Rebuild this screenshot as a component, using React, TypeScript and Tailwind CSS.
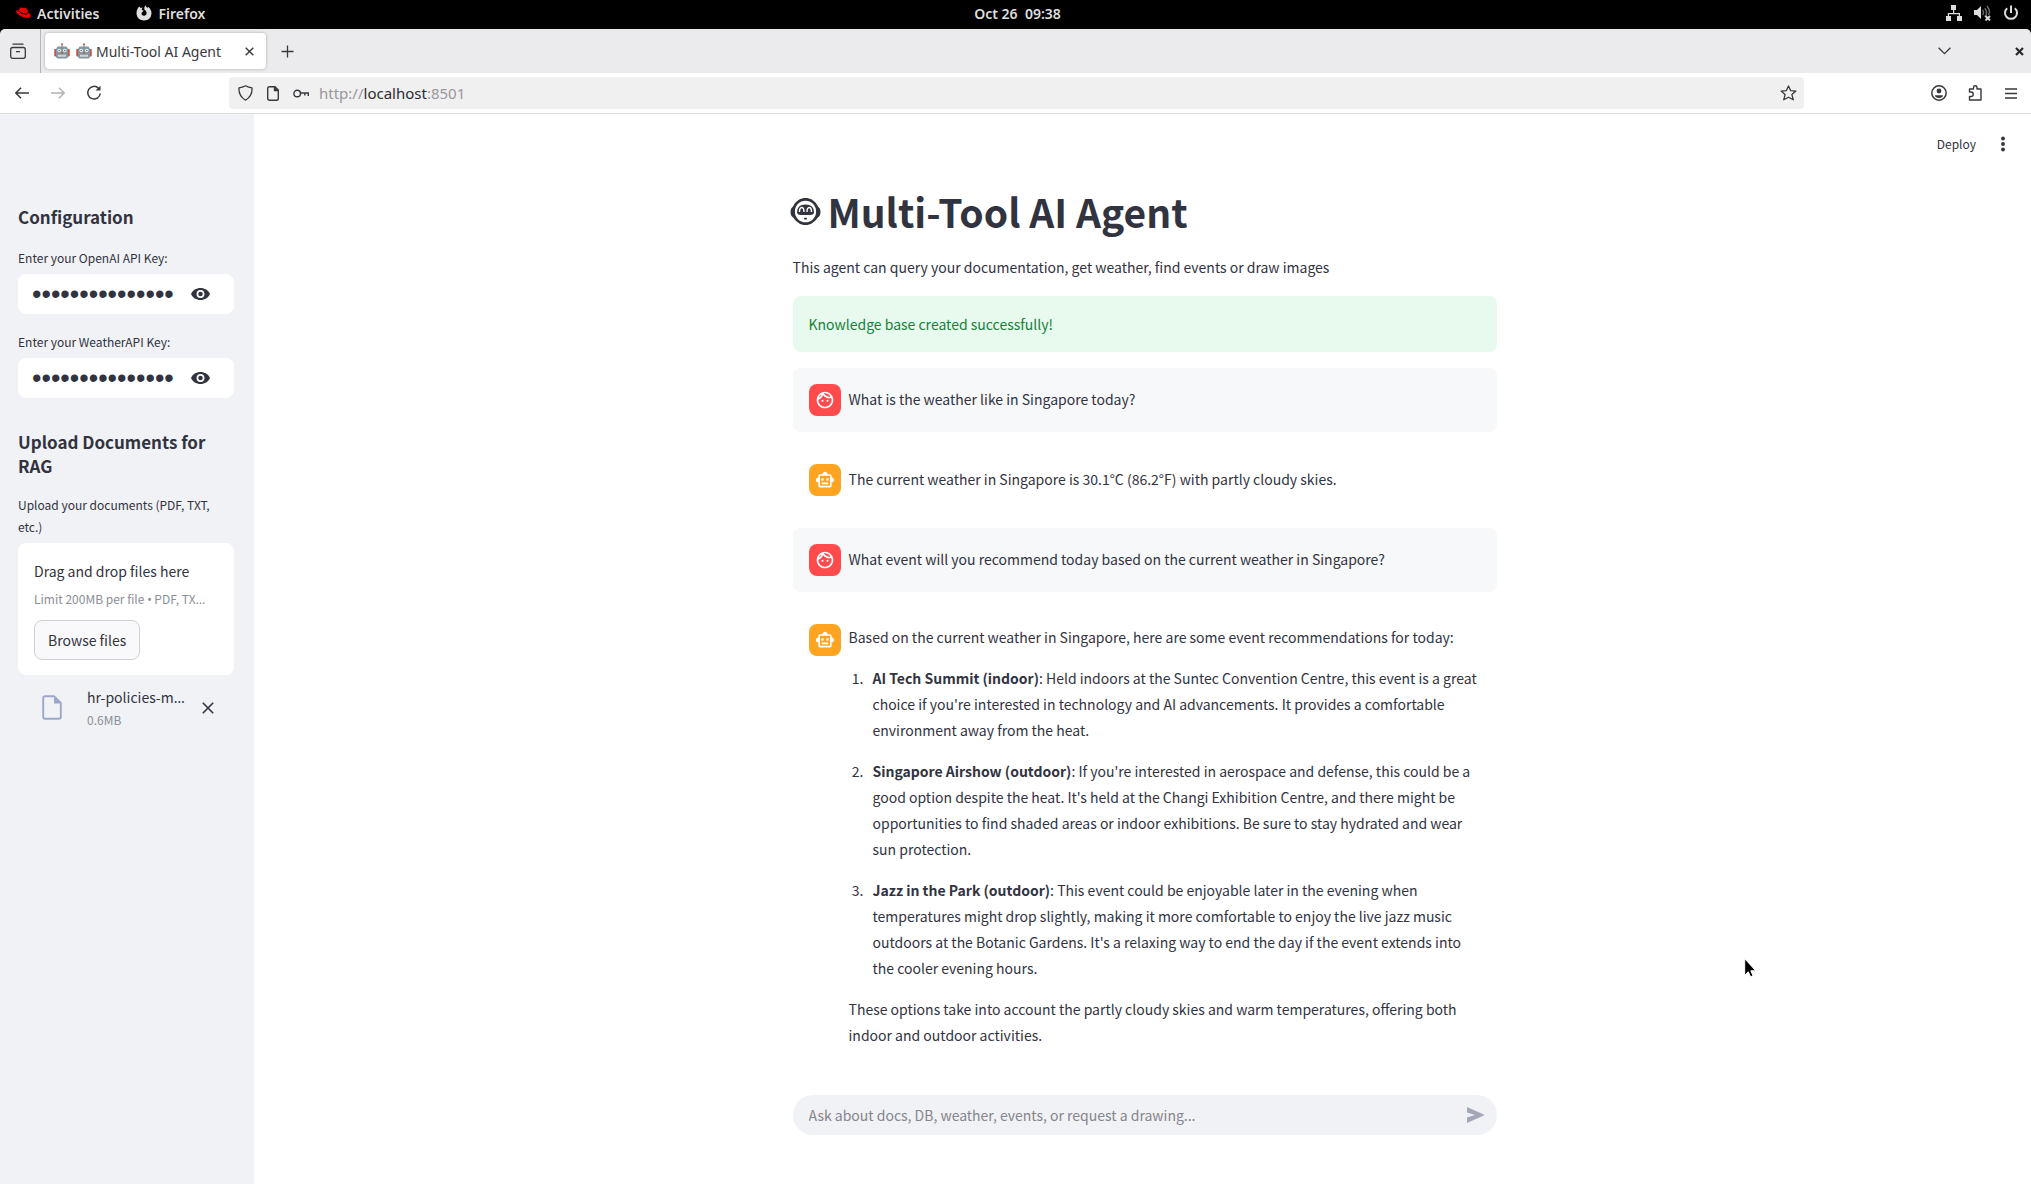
import React from "react";
import { MdOutlineFace, MdOutlineSmartToy } from "react-icons/md";

function RobotEmoji() {
  return (
    <svg width="16" height="16" viewBox="0 0 32 32" aria-hidden="true" className="shrink-0">
      <rect x="0.5" y="12" width="4" height="15" rx="1.5" fill="#c9504f" />
      <rect x="27.5" y="12" width="4" height="15" rx="1.5" fill="#c9504f" />
      <path d="M16 2v7" stroke="#7b8a93" strokeWidth="2" />
      <circle cx="16" cy="2.6" r="2" fill="#d9534f" />
      <path d="M7 7h18l3 5v15q0 4-4 4H8q-4 0-4-4V12z" fill="#84979f" />
      <circle cx="10.5" cy="15" r="3.6" fill="#eef3f5" />
      <circle cx="21.5" cy="15" r="3.6" fill="#eef3f5" />
      <circle cx="10.5" cy="15" r="1.6" fill="#5d7079" />
      <circle cx="21.5" cy="15" r="1.6" fill="#5d7079" />
      <path d="M16 17l2.4 4h-4.8z" fill="#d9403f" />
      <rect x="8" y="23.5" width="16" height="4" rx="1.5" fill="#dfe6e9" />
      <path d="M12 23.5v4M16 23.5v4M20 23.5v4" stroke="#84979f" />
    </svg>
  );
}

function RobotFace() {
  return (
    <svg width="31" height="27" viewBox="0 0 31 27" fill="none" aria-hidden="true" className="-ml-[3px] mr-[7px] shrink-0">
      <path d="M4 8Q.5 9.500.5 14T4 20zM27 8q3.500 1.500 3.500 6T27 20z" fill="#31333f" />
      <ellipse cx="15.500" cy="13.500" rx="12" ry="12.200" stroke="#31333f" strokeWidth="2.800" fill="#fff" />
      <path d="M7 14.500Q7 6.500 15.500 6.500T24 14.500Q23.500 17 20 17H11Q7.500 17 7 14.500z" fill="#31333f" />
      <path d="M9.500 14q0-4.500 2.200-4.500T14 14M17 14q0-4.500 2.200-4.500T21.500 14" stroke="#fff" strokeWidth="1.400" />
      <rect x="14" y="19.800" width="3" height="1.600" rx=".6" fill="#31333f" />
    </svg>
  );
}

function SystemBar() {
  return (
    <header className="flex h-[29px] items-center bg-black pb-[3px] pl-4 pr-3 text-[14px] font-semibold text-[#dedede]">
      <div className="flex flex-1 items-center">
        <button className="flex h-6 items-center gap-[6px]">
          <svg width="15" height="12" viewBox="0 0 15 12" aria-hidden="true">
            <path d="M3.600 1.200Q4 .2 5.200.6 6.500 1.200 7.400.9 9 .2 10.400 1.300 11.500 2.200 12.300 5.800 14.700 7 14.900 8.800 14.900 11 11.300 11 7 11 3.300 8.300.2 6.300.1 4.500 0 3 3 3.300z" fill="#e00" />
            <path d="M2.900 3.700Q3 5 6 6.400 10.500 8.200 12.200 6" stroke="#000" strokeWidth="1" fill="none" />
          </svg>
          Activities
        </button>
        <button className="ml-[37px] flex h-6 items-center gap-[6px]">
          <svg width="16" height="16" viewBox="0 0 16 16" fill="none" aria-hidden="true">
            <path d="M3.200 1.500 4.600 3 6.500 2.600 5.600 4.800 7.600 5.800 6 7.500Q5 8.300 5.700 9.500 7 11.300 9 10.600 11 9.600 10.600 7.400 10 5.500 8.300 4.400 7.800 2.200 9.600.3 10 2 11.300 3L12.200 1.800Q15.700 4.600 15.500 8.700 14.800 15 8 15.600 1.500 15.300.5 9 .3 4.500 3.200 1.500z" fill="#dedede" />
          </svg>
          Firefox
        </button>
      </div>
      <time>Oct 26&nbsp; 09:38</time>
      <div className="flex flex-1 items-center justify-end gap-3">
        <svg width="16" height="16" viewBox="0 0 16 16" fill="#dedede" aria-hidden="true">
          <path d="M5 0h5v5H5zM0 11h5v5H0zM11 11h5v5h-5zM7 5h1.200v3H14v3h-1.200V9.200H3V11H1.800V8H7z" />
        </svg>
        <svg width="17" height="16" viewBox="0 0 17 16" aria-hidden="true">
          <path d="M0 5h3l4-4v13l-4-4H0z" fill="#dedede" />
          <path d="M8.500 5q2 2.500 0 5M10.800 3.200q3.500 4.300 0 8.600M13 1q4 5 1.500 9" stroke="#666" strokeWidth="1.500" fill="none" />
          <path d="m11.500 11 4.500 4.500m0-4.500-4.500 4.500" stroke="#dedede" strokeWidth="1.800" />
        </svg>
        <svg width="16" height="16" viewBox="0 0 16 16" fill="none" stroke="#dedede" strokeWidth="2" aria-hidden="true">
          <path d="M4.200 3.200a6 6 0 1 0 7.600 0M8 .5V8" />
        </svg>
      </div>
    </header>
  );
}

function TabStrip() {
  return (
    <div className="bg-black">
      <div className="flex h-11 items-center rounded-t-[5px] bg-[#ebebed] pr-[7px] text-[#38383d]">
        <button aria-label="Firefox View" className="flex h-full w-[41px] items-center justify-center border-r border-[#b5b5b9] pr-1">
          <svg width="16" height="16" viewBox="0 0 16 16" fill="none" stroke="currentColor" strokeWidth="1.300" aria-hidden="true">
            <rect x=".7" y="4.500" width="14.600" height="10.800" rx="2" />
            <path d="M2.500 1.200h11M6 8.600h4" />
          </svg>
        </button>
        <div className="ml-1 flex h-9 w-[221px] items-center rounded bg-white pl-[9px] pr-3 text-[14px] shadow-[0_0_3px_rgba(0,0,0,0.3)]">
          <RobotEmoji />
          <span className="ml-[6px] flex flex-1 items-center gap-1 whitespace-nowrap">
            <RobotEmoji />
            Multi-Tool AI Agent
          </span>
          <button aria-label="Close tab">
            <svg width="9" height="9" viewBox="0 0 9 9" stroke="currentColor" strokeWidth="1.400" aria-hidden="true">
              <path d="m.7.7 7.600 7.600m0-7.600L.7 8.300" />
            </svg>
          </button>
        </div>
        <button aria-label="New tab" className="ml-[15px]">
          <svg width="13" height="13" viewBox="0 0 13 13" stroke="currentColor" strokeWidth="1.300" aria-hidden="true">
            <path d="M6.500.5v12M.5 6.500h12" />
          </svg>
        </button>
        <button aria-label="List all tabs" className="ml-auto">
          <svg width="13" height="8" viewBox="0 0 13 8" fill="none" stroke="currentColor" strokeWidth="1.300" aria-hidden="true">
            <path d="m.6.800 5.900 5.800L12.400.8" />
          </svg>
        </button>
        <button aria-label="Close window" className="ml-[64px]">
          <svg width="9" height="9" viewBox="0 0 9 9" stroke="#2a2a2e" strokeWidth="2.200" aria-hidden="true">
            <path d="m1 1 7 7m0-7L1 8" />
          </svg>
        </button>
      </div>
    </div>
  );
}

function Toolbar() {
  return (
    <div className="flex h-[41px] items-center border-b border-[#dcdcdf] bg-white pl-[15px] pr-[14px] text-[#38383d]">
      <button aria-label="Back">
        <svg width="14" height="12" viewBox="0 0 14 12" fill="none" stroke="currentColor" strokeWidth="1.500" aria-hidden="true">
          <path d="M14 6H1M6 .7.900 6 6 11.300" />
        </svg>
      </button>
      <button aria-label="Forward" className="ml-[22px] text-[#b4b4b7]">
        <svg width="14" height="12" viewBox="0 0 14 12" fill="none" stroke="currentColor" strokeWidth="1.500" aria-hidden="true">
          <path d="M0 6h13M8 .7 13.100 6 8 11.300" />
        </svg>
      </button>
      <button aria-label="Reload" className="ml-[21px]">
        <svg width="16" height="16" viewBox="0 0 16 16" fill="none" aria-hidden="true">
          <path d="M12.500 3.200A6.300 6.300 0 1 0 14.300 8.500" stroke="currentColor" strokeWidth="1.500" />
          <path d="M9.500 5.500h5V.7z" fill="currentColor" />
        </svg>
      </button>
      <div className="ml-[127px] mr-[127px] flex h-8 flex-1 items-center rounded bg-[#f0f0f1] pl-[9px] pr-[7px]">
        <svg width="15" height="16" viewBox="0 0 15 16" fill="none" stroke="currentColor" strokeWidth="1.300" aria-hidden="true">
          <path d="M7.500.800Q10.500 2.500 14 2.800 14.600 11 7.500 15.200.4 11 1 2.800 4.500 2.500 7.500.8z" strokeLinejoin="round" />
        </svg>
        <svg width="12" height="15" viewBox="0 0 12 15" fill="none" stroke="currentColor" strokeWidth="1.400" className="ml-[14px]" aria-hidden="true">
          <path d="M2.500.700H8L11.300 4v8.500a1.800 1.800 0 0 1-1.800 1.800h-7A1.800 1.800 0 0 1 .7 12.500v-10A1.800 1.800 0 0 1 2.500.7z" />
          <path d="M7.500 1v3.500H11" fill="currentColor" />
        </svg>
        <svg width="17" height="9" viewBox="0 0 17 9" fill="none" stroke="currentColor" strokeWidth="1.400" className="ml-[14px]" aria-hidden="true">
          <circle cx="4.200" cy="4.500" r="3.300" />
          <path d="M7.500 4H16M15.300 4v3M11.800 4v2.500" />
        </svg>
        <a href="http://localhost:8501" className="ml-[9px] text-[15px] text-[#98989c]">
          http://<span className="text-[#2a2a2e]">localhost</span>:8501
        </a>
        <button aria-label="Bookmark this page" className="ml-auto">
          <svg width="17" height="16" viewBox="0 0 17 16" fill="none" stroke="currentColor" strokeWidth="1.300" strokeLinejoin="round" aria-hidden="true">
            <path d="m8.500 1 2.100 4.600 5.300.5-4 3.500 1.400 5.200-4.800-2.600-4.800 2.600 1.400-5.200-4-3.500 5.300-.5z" />
          </svg>
        </button>
      </div>
      <button aria-label="Account">
        <svg width="16" height="16" viewBox="0 0 16 16" fill="none" aria-hidden="true">
          <circle cx="8" cy="8" r="7.200" stroke="currentColor" strokeWidth="1.500" />
          <circle cx="8" cy="6" r="2.400" fill="currentColor" />
          <path d="M4 10.300h8l-.6 1.700Q8 14 4.600 12z" fill="currentColor" />
        </svg>
      </button>
      <button aria-label="Extensions" className="ml-[21px]">
        <svg width="15" height="16" viewBox="0 0 15 16" fill="none" stroke="currentColor" strokeWidth="1.400" strokeLinejoin="round" aria-hidden="true">
          <path d="M1.500 7V4h4V2.500a1.700 1.700 0 0 1 3.500 0V4h4v11H1.500v-3.500H3A2.200 2.200 0 0 0 3 7z" />
        </svg>
      </button>
      <button aria-label="Open menu" className="ml-[22px]">
        <svg width="12" height="11" viewBox="0 0 12 11" stroke="currentColor" strokeWidth="1.300" aria-hidden="true">
          <path d="M0 1h12M0 5.500h12M0 10h12" />
        </svg>
      </button>
    </div>
  );
}

function SecretField({ id, label }: { id: string; label: string }) {
  return (
    <div className="mb-4">
      <label htmlFor={id} className="block h-7 text-[12px] leading-6">{label}</label>
      <div className="flex h-10 items-center rounded-lg bg-white pl-[14px] pr-6">
        <input
          id={id}
          type="password"
          defaultValue="sk-proj-secret1"
          className="h-full min-w-0 flex-1 bg-transparent font-['Liberation_Sans'] text-[27px] outline-none"
        />
        <button aria-label="Show password text" className="ml-3">
          <svg width="19" height="12" viewBox="0 0 19 12" aria-hidden="true">
            <path d="M9.500 0C5.200 0 1.600 2.300 0 6c1.600 3.700 5.200 6 9.500 6s7.900-2.300 9.500-6c-1.600-3.700-5.200-6-9.500-6z" fill="#31333f" />
            <circle cx="9.500" cy="6" r="3.100" fill="none" stroke="#fff" strokeWidth="1.700" />
          </svg>
        </button>
      </div>
    </div>
  );
}

function Sidebar() {
  return (
    <aside className="w-[254px] shrink-0 bg-[#f0f2f6] px-[18px] pr-5 pt-[87px]">
      <h2 className="mb-[13px] text-[17px] font-bold leading-8">Configuration</h2>
      <SecretField id="openai-key" label="Enter your OpenAI API Key:" />
      <SecretField id="weather-key" label="Enter your WeatherAPI Key:" />
      <h2 className="mb-4 mt-8 text-[17px] font-bold leading-6">Upload Documents for RAG</h2>
      <label htmlFor="browse" className="mb-[5px] block text-[12px] leading-[22px]">Upload your documents (PDF, TXT, etc.)</label>
      <section className="h-[132px] rounded-lg bg-white px-4 pt-[15px]">
        <p className="text-[14px] leading-[26px]">Drag and drop files here</p>
        <p className="mt-1 whitespace-nowrap text-[12px] leading-[22px] text-[#8d8e96]">
          Limit 200MB per file <span className="font-['Noto_Sans']">•</span> PDF, TX<span className="font-['Noto_Sans']">…</span>
        </p>
        <button id="browse" className="mt-[9px] h-10 rounded-lg border border-[#d0d1d6] bg-[#f9f9fb] px-[13px] text-[14px]">Browse files</button>
      </section>
      <div className="flex items-center pl-6 pr-5 pt-[10px]">
        <svg width="20" height="25" viewBox="0 0 20 25" fill="none" aria-hidden="true">
          <path d="M3 1.200h9L18.800 8v13.800a2 2 0 0 1-2 2H3.200a2 2 0 0 1-2-2V3a1.800 1.800 0 0 1 1.800-1.800z" stroke="#9aa9cb" strokeWidth="1.900" />
          <path d="M12 1v7.500h7z" fill="#9aa9cb" />
        </svg>
        <div className="ml-[25px] flex-1">
          <p className="whitespace-nowrap text-[14px] leading-6">
            hr-policies-m<span className="font-['Noto_Sans']">…</span>
          </p>
          <p className="text-[12px] leading-5 text-[#8d8e96]">0.6MB</p>
        </div>
        <button aria-label="Remove file">
          <svg width="12" height="12" viewBox="0 0 12 12" stroke="#31333f" strokeWidth="1.600" aria-hidden="true">
            <path d="m.8.8 10.400 10.400m0-10.400L.8 11.200" />
          </svg>
        </button>
      </div>
    </aside>
  );
}

function Message({ from, children }: { from: "user" | "bot"; children: React.ReactNode }) {
  const user = from === "user";
  return (
    <article className={user ? "flex gap-2 rounded-lg bg-[#f7f8fa] p-4" : "flex gap-2 p-4"}>
      <span className={user ? "flex size-8 shrink-0 items-center justify-center rounded-lg bg-[#ff4b4b] text-white" : "flex size-8 shrink-0 items-center justify-center rounded-lg bg-[#ffa421] text-white"}>
        {user ? <MdOutlineFace size={20} /> : <MdOutlineSmartToy size={20} />}
      </span>
      <div className="min-w-0 flex-1">{children}</div>
    </article>
  );
}

const events = [
  {
    name: "AI Tech Summit (indoor)",
    text: "Held indoors at the Suntec Convention Centre, this event is a great choice if you're interested in technology and AI advancements. It provides a comfortable environment away from the heat.",
  },
  {
    name: "Singapore Airshow (outdoor)",
    text: "If you're interested in aerospace and defense, this could be a good option despite the heat. It's held at the Changi Exhibition Centre, and there might be opportunities to find shaded areas or indoor exhibitions. Be sure to stay hydrated and wear sun protection.",
  },
  {
    name: "Jazz in the Park (outdoor)",
    text: "This event could be enjoyable later in the evening when temperatures might drop slightly, making it more comfortable to enjoy the live jazz music outdoors at the Botanic Gardens. It's a relaxing way to end the day if the event extends into the cooler evening hours.",
  },
];

function Chat() {
  return (
    <div className="mx-auto flex w-full max-w-[704px] flex-1 flex-col">
      <h1 className="flex items-center text-[39px] font-bold leading-[54px]">
        <RobotFace />
        Multi-Tool AI Agent
      </h1>
      <p className="mt-4 text-[14px] leading-[26px]">This agent can query your documentation, get weather, find events or draw images</p>
      <p role="status" className="mt-4 rounded-lg bg-[#e8f9ee] px-4 py-[15px] text-[14px] leading-[26px] text-[#158237]">Knowledge base created successfully!</p>
      <div className="mt-4 flex flex-col gap-4 text-[14px]">
        <Message from="user"><p className="leading-[30px]">What is the weather like in Singapore today?</p></Message>
        <Message from="bot"><p className="leading-[30px]">The current weather in Singapore is 30.1°C (86.2°F) with partly cloudy skies.</p></Message>
        <Message from="user"><p className="leading-[30px]">What event will you recommend today based on the current weather in Singapore?</p></Message>
        <Message from="bot">
          <div className="flex flex-col gap-[15px] leading-[26px]">
            <p>Based on the current weather in Singapore, here are some event recommendations for today:</p>
            <ol className="flex list-decimal flex-col gap-[15px] pl-[18px]">
              {events.map((e) => (
                <li key={e.name} className="pl-[6px]">
                  <strong className="font-semibold">{e.name}</strong>: {e.text}
                </li>
              ))}
            </ol>
            <p>These options take into account the partly cloudy skies and warm temperatures, offering both indoor and outdoor activities.</p>
          </div>
        </Message>
      </div>
      <form className="mb-[49px] mt-auto flex h-10 items-center rounded-full bg-[#f0f2f6] pl-4 pr-3" onSubmit={(e) => e.preventDefault()}>
        <input aria-label="Chat message" placeholder="Ask about docs, DB, weather, events, or request a drawing..." className="h-full min-w-0 flex-1 bg-transparent text-[14px] outline-none placeholder:text-[#84858e]" />
        <button aria-label="Send message">
          <svg width="18" height="16" viewBox="0 0 18 16" fill="#a3a8b8" aria-hidden="true">
            <path d="M0 0 17.800 8 0 16V10.500L8 8 0 5.500z" />
          </svg>
        </button>
      </form>
    </div>
  );
}

export default function App() {
  return (
    <div className="relative flex min-h-screen flex-col bg-white font-['Noto_Sans_CJK_SC',sans-serif] text-[#31333f]">
      <div className="font-['Noto_Sans',sans-serif]">
        <SystemBar />
        <TabStrip />
        <Toolbar />
      </div>
      <div className="flex flex-1">
        <Sidebar />
        <main className="flex flex-1 flex-col pl-1">
          <div className="mb-[10px] flex h-[60px] items-center justify-end gap-6 pr-[25px]">
            <button className="text-[12px]">Deploy</button>
            <button aria-label="Main menu">
              <svg width="6" height="16" viewBox="0 0 6 16" fill="#31333f" aria-hidden="true">
                <circle cx="3" cy="2.500" r="1.900" />
                <circle cx="3" cy="8" r="1.900" />
                <circle cx="3" cy="13.500" r="1.900" />
              </svg>
            </button>
          </div>
          <Chat />
        </main>
      </div>
      <svg width="13" height="20" viewBox="0 0 13 20" className="pointer-events-none absolute left-[1744px] top-[958px]" aria-hidden="true">
        <path d="M.7.7v16.500l3.600-3.400 2.300 5 2.400-1.100-2.200-4.900h5z" fill="#000" stroke="#fff" strokeWidth="1" />
      </svg>
    </div>
  );
}
